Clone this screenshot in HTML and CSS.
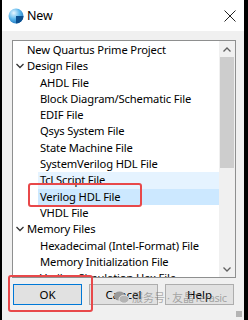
FILE: index.html
```html
<!DOCTYPE html>
<html lang="en">
<head>
  <meta charset="UTF-8" />
  <title>New</title>
  <link rel="stylesheet" href="styles.css">
</head>
<body>
  <div class="window">
    <div class="titlebar">
      <svg class="app-icon" width="16" height="16" viewBox="0 0 16 16">
        <defs>
          <radialGradient id="ball" cx="0.35" cy="0.3" r="0.8">
            <stop offset="0" stop-color="#e8f6ff"/>
            <stop offset="0.5" stop-color="#5ab6ec"/>
            <stop offset="1" stop-color="#1a6fb8"/>
          </radialGradient>
        </defs>
        <circle cx="8" cy="8" r="7.5" fill="url(#ball)"/>
        <path d="M8 8 L15.5 8 A7.5 7.5 0 0 1 8 15.5 Z" fill="#0b4f8f"/>
      </svg>
      <span class="title">New</span>
      <svg class="close" width="12" height="12" viewBox="0 0 12 12">
        <path d="M0.5 0.5 L11.5 11.5 M11.5 0.5 L0.5 11.5" stroke="#222" stroke-width="1" fill="none"/>
      </svg>
    </div>

    <div class="content">
      <div class="listbox">
        <ul class="tree">
          <li class="row top">New Quartus Prime Project</li>
          <li class="row group"><svg class="chev" width="8" height="6" viewBox="0 0 8 6"><path d="M0.5 1 L4 4.5 L7.5 1" stroke="#333" stroke-width="1.3" fill="none"/></svg>Design Files</li>
          <li class="row child">AHDL File</li>
          <li class="row child">Block Diagram/Schematic File</li>
          <li class="row child">EDIF File</li>
          <li class="row child">Qsys System File</li>
          <li class="row child">State Machine File</li>
          <li class="row child">SystemVerilog HDL File</li>
          <li class="row child hover">Tcl Script File</li>
          <li class="row child selected">Verilog HDL File</li>
          <li class="row child">VHDL File</li>
          <li class="row group"><svg class="chev" width="8" height="6" viewBox="0 0 8 6"><path d="M0.5 1 L4 4.5 L7.5 1" stroke="#333" stroke-width="1.3" fill="none"/></svg>Memory Files</li>
          <li class="row child">Hexadecimal (Intel-Format) File</li>
          <li class="row child">Memory Initialization File</li>
          <li class="row child">Verilog Simulation Hex File</li>
        </ul>
        <div class="scrollbar">
          <div class="arrow"><svg width="8" height="5" viewBox="0 0 8 5"><path d="M0.5 4.5 L4 1 L7.5 4.5" stroke="#606060" stroke-width="1.3" fill="none"/></svg></div>
          <div class="thumb"></div>
          <div class="track"></div>
          <div class="arrow"><svg width="8" height="5" viewBox="0 0 8 5"><path d="M0.5 0.5 L4 4 L7.5 0.5" stroke="#606060" stroke-width="1.3" fill="none"/></svg></div>
        </div>
      </div>

      <div class="buttons">
        <button class="btn default">OK</button>
        <button class="btn">Cancel</button>
        <button class="btn">Help</button>
      </div>
    </div>

    <div class="mark mark-verilog"></div>
    <div class="mark mark-ok"></div>

    <div class="watermark">
      <svg width="15" height="13" viewBox="0 0 15 13">
        <ellipse cx="5.5" cy="5" rx="5.5" ry="4.5" fill="#9a9a9a"/>
        <ellipse cx="10" cy="8.2" rx="5" ry="4" fill="#b4b4b4" stroke="#f0f0f0" stroke-width="0.8"/>
      </svg>
      <span>服务号<span class="dot">·</span>友晶<span class="brand">Terasic</span></span>
    </div>
    <div class="grip"></div>
  </div>
</body>
</html>
```

FILE: styles.css
```css
body {
  margin: 0;
  font-family: "Noto Sans", "Noto Sans CJK SC", sans-serif;
  font-size: 11.2px;
  letter-spacing: -0.15px;
  color: #000;
}

.window {
  position: relative;
  width: 248px;
  height: 320px;
  box-sizing: border-box;
  border-left: 2px solid #000;
  border-right: 4px solid #000;
  background: #f0f0f0;
  overflow: hidden;
}

.titlebar {
  height: 31px;
  background: #fff;
  display: flex;
  align-items: center;
  padding-left: 6px;
}

.app-icon {
  margin-right: 3px;
}

.title {
  font-size: 12.5px;
  flex: 1;
}

.close {
  margin-right: 8px;
}

.content {
  padding: 9px 0 0 10px;
}

.listbox {
  width: 224px;
  height: 238px;
  box-sizing: border-box;
  border: 1px solid #8e8f8f;
  background: #fff;
  display: flex;
}

.tree {
  flex: 1;
  list-style: none;
  margin: 0;
  padding: 1px 0 0;
  overflow: hidden;
}

.row {
  height: 16.3px;
  line-height: 16.3px;
  white-space: nowrap;
}

.top {
  padding-left: 14px;
}

.group {
  padding-left: 3px;
  display: flex;
  align-items: center;
}

.chev {
  margin-right: 3px;
}

.child {
  margin-left: 25px;
  padding-left: 2px;
}

.hover {
  background: #e5f3ff;
}

.selected {
  background: #cce8ff;
}

.scrollbar {
  width: 16px;
  background: #f0f0f0;
  display: flex;
  flex-direction: column;
}

.arrow {
  height: 16px;
  display: flex;
  align-items: center;
  justify-content: center;
}

.thumb {
  height: 111px;
  margin: 0 1px;
  background: #cdcdcd;
}

.track {
  flex: 1;
}

.buttons {
  display: flex;
  gap: 7px;
  margin: 6px 0 0 1px;
}

.btn {
  width: 69px;
  height: 21px;
  padding: 0;
  font: inherit;
  font-size: 11.5px;
  background: #e1e1e1;
  border: 1px solid #adadad;
  color: #000;
}

.btn.default {
  border: 1px solid #0078d7;
}

.mark {
  position: absolute;
  border: 2px solid #e8484a;
  border-radius: 3px;
}

.mark-verilog {
  left: 26px;
  top: 183px;
  width: 110px;
  height: 20px;
}

.mark-ok {
  left: 6px;
  top: 275px;
  width: 81px;
  height: 33px;
}

.watermark {
  position: absolute;
  left: 112px;
  top: 289px;
  display: flex;
  align-items: center;
  gap: 3px;
  white-space: nowrap;
  letter-spacing: 0;
  color: rgba(110, 110, 110, 0.55);
  font-size: 11px;
}

.dot {
  margin: 0 2px;
}

.brand {
  letter-spacing: -0.4px;
}

.grip {
  position: absolute;
  right: 2px;
  bottom: 3px;
  width: 6px;
  height: 6px;
  background: radial-gradient(circle, #b0b0b0 0.7px, transparent 0.8px) 0 0 / 2px 2px;
}
```
